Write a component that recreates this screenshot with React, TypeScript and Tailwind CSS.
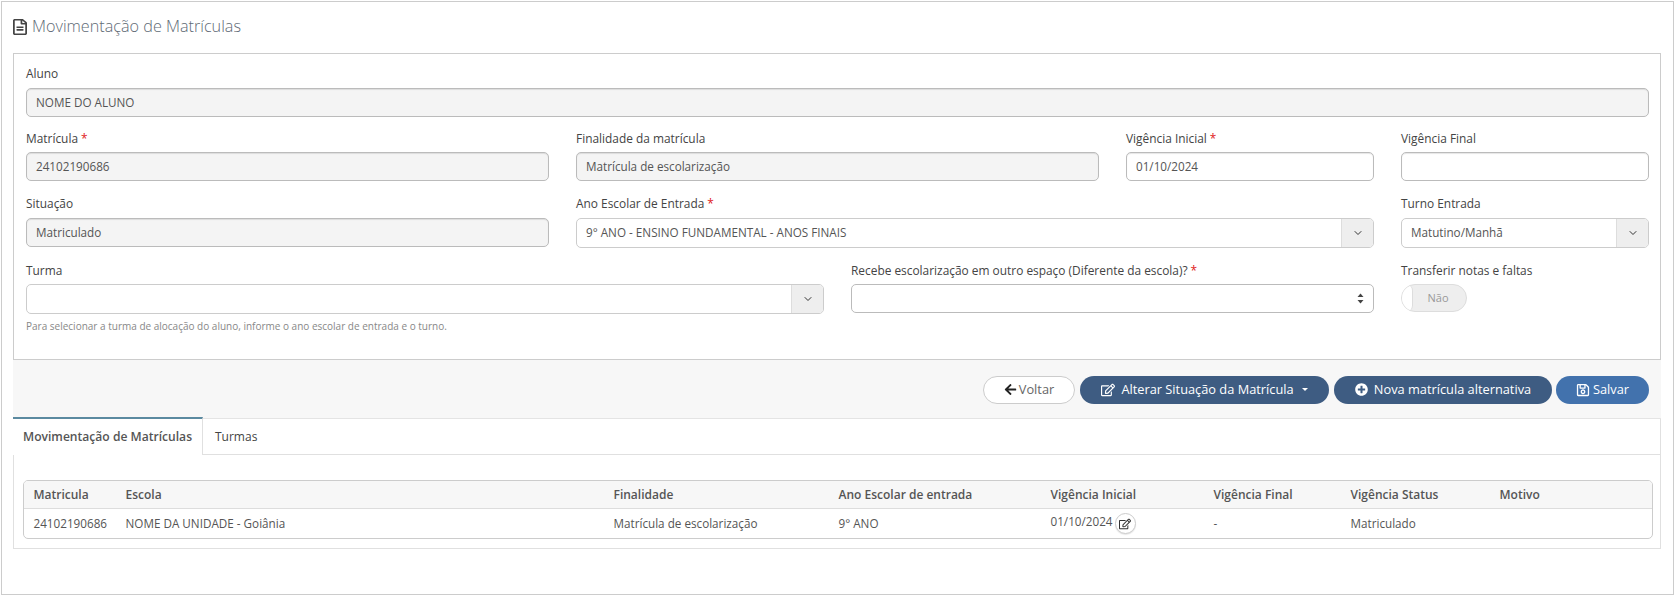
import { ChevronDown } from "lucide-react";
import { FaArrowLeft, FaPlusCircle, FaRegEdit, FaRegFileAlt, FaRegSave } from "react-icons/fa";

function Label({ text, required, loose }: { text: string; required?: boolean; loose?: boolean }) {
  return (
    <label className={`block h-4 text-[11.9px] leading-[14px] text-[#444] ${loose ? "mb-[6px]" : "mb-[5px]"}`}>
      {text}
      {required && <span className="text-[#e02020] ml-[3px]">*</span>}
    </label>
  );
}

function Input({ value, disabled }: { value?: string; disabled?: boolean }) {
  return (
    <div
      className={`h-[29px] flex items-center px-[9px] border border-[#bbb] rounded-[5px] text-[11.7px] text-[#555] shadow-[inset_0_1px_1px_rgba(0,0,0,0.1)] ${
        disabled ? "bg-[#f4f4f4]" : "bg-white"
      }`}
    >
      {value}
    </div>
  );
}

function Select({ value }: { value?: string }) {
  return (
    <div className="h-[30px] flex items-stretch border border-[#ccc] rounded-[5px] text-[11.7px] text-[#555] bg-white overflow-hidden">
      <div className="flex-1 flex items-center px-[9px]">{value}</div>
      <div className="w-[32px] flex items-center justify-center bg-[#eee] border-l border-[#ddd]">
        <ChevronDown size={12} strokeWidth={2} className="text-[#333]" />
      </div>
    </div>
  );
}

const columns = [
  { title: "Matricula", w: "w-[92px]" },
  { title: "Escola", w: "w-[488px]" },
  { title: "Finalidade", w: "w-[225px]" },
  { title: "Ano Escolar de entrada", w: "w-[212px]" },
  { title: "Vigência Inicial", w: "w-[163px]" },
  { title: "Vigência Final", w: "w-[137px]" },
  { title: "Vigência Status", w: "w-[149px]" },
  { title: "Motivo", w: "flex-1" },
];

export default function App() {
  return (
    <div className="w-[1675px] h-[596px] bg-white p-[1px] font-['Open_Sans',sans-serif]">
      <div className="h-[594px] border border-[#ccc] pl-[11px] pr-[12px]">
        {/* Titulo */}
        <div className="h-[51px] flex items-center gap-[5px] pb-[2px] text-[#606a75]">
          <FaRegFileAlt className="w-[14px] h-[16px] text-[#444]" preserveAspectRatio="none" />
          <h1 className="text-[16.2px] font-light">Movimentação de Matrículas</h1>
        </div>

        {/* Formulario */}
        <div className="h-[307px] border border-[#ccc] pl-[12px] pr-[11px] pt-[12px]">
          <Label text="Aluno" loose />
          <Input value="NOME DO ALUNO" disabled />

          <div className="grid grid-cols-12 gap-x-[27px] mt-[14px]">
            <div className="col-span-4">
              <Label text="Matrícula" required />
              <Input value="24102190686" disabled />
            </div>
            <div className="col-span-4">
              <Label text="Finalidade da matrícula" />
              <Input value="Matrícula de escolarização" disabled />
            </div>
            <div className="col-span-2">
              <Label text="Vigência Inicial" required />
              <Input value="01/10/2024" />
            </div>
            <div className="col-span-2">
              <Label text="Vigência Final" />
              <Input />
            </div>
          </div>

          <div className="grid grid-cols-12 gap-x-[27px] mt-[15px]">
            <div className="col-span-4">
              <Label text="Situação" loose />
              <Input value="Matriculado" disabled />
            </div>
            <div className="col-span-6">
              <Label text="Ano Escolar de Entrada" required loose />
              <Select value="9° ANO - ENSINO FUNDAMENTAL - ANOS FINAIS" />
            </div>
            <div className="col-span-2">
              <Label text="Turno Entrada" loose />
              <Select value="Matutino/Manhã" />
            </div>
          </div>

          <div className="grid grid-cols-12 gap-x-[27px] mt-[15px]">
            <div className="col-span-6">
              <Label text="Turma" />
              <Select />
              <p className="mt-[6px] text-[10px] leading-3 text-[#888]">
                Para selecionar a turma de alocação do aluno, informe o ano escolar de entrada e o turno.
              </p>
            </div>
            <div className="col-span-4">
              <Label text="Recebe escolarização em outro espaço (Diferente da escola)?" required />
              <div className="h-[29px] flex items-center justify-end pr-[9px] border border-[#bbb] rounded-[5px] bg-white">
                <svg width="7" height="11" viewBox="0 0 7 11" fill="#444">
                  <path d="M3.5 0.5 6.5 4H0.5Z" />
                  <path d="M3.5 10.5 0.5 7H6.5Z" />
                </svg>
              </div>
            </div>
            <div className="col-span-2">
              <Label text="Transferir notas e faltas" />
              <div className="relative w-[66px] h-[28px] flex items-center justify-center pl-[8px] rounded-full border border-[#ddd] bg-[#eee] text-[11px] text-[#999] overflow-hidden">
                <span className="absolute left-0 top-0 w-[11px] h-full rounded-full bg-white border-r border-[#ddd]" />
                Não
              </div>
            </div>
          </div>
        </div>

        {/* Botoes */}
        <div className="h-[59px] bg-[#f7f7f7] flex items-center justify-end pr-[12px] pt-[1px] text-[12.8px] border-b border-[#e4e4e4]">
          <button className="w-[92px] h-[28px] flex items-center justify-center gap-[2px] rounded-full border border-[#ccc] bg-white text-[#666]">
            <FaArrowLeft size={13} className="text-[#222]" />
            Voltar
          </button>
          <button className="ml-[5px] w-[249px] h-[28px] flex items-center justify-center gap-[6px] rounded-full bg-[#3e5c82] text-white">
            <FaRegEdit size={14} />
            Alterar Situação da Matrícula
            <span className="ml-[2px] border-x-[3px] border-x-transparent border-t-[3px] border-t-white" />
          </button>
          <button className="ml-[5px] w-[218px] h-[28px] flex items-center justify-center gap-[6px] rounded-full bg-[#3e5c82] text-white">
            <FaPlusCircle size={13} />
            Nova matrícula alternativa
          </button>
          <button className="ml-[4px] w-[93px] h-[28px] flex items-center justify-center gap-[3px] rounded-full bg-[#4272ad] text-white">
            <FaRegSave size={14} />
            Salvar
          </button>
        </div>

        {/* Abas */}
        <div className="h-[130px] border border-t-0 border-[#e0e0e0]">
          <div className="h-[36px] flex border-b border-[#e0e0e0] text-[12px] text-[#444]">
            <div className="w-[190px] -ml-px -mt-[2px] flex items-center pl-[10px] h-[38px] pt-[1px] border-t-2 border-t-[#5b8aa0] border-r border-r-[#e0e0e0] bg-white text-[12.1px] font-semibold text-[#555]">
              Movimentação de Matrículas
            </div>
            <div className="px-[12px] flex items-center">Turmas</div>
          </div>

          <div className="ml-[9px] mr-[7px] mt-[25px] border border-[#ccc] rounded-[5px] text-[11.7px] overflow-hidden">
            <div className="h-[28px] flex items-center px-[9.5px] bg-[#f7f7f7] border-b border-[#ddd] text-[12px] font-semibold text-[#555]">
              {columns.map((c) => (
                <div key={c.title} className={c.w}>
                  {c.title}
                </div>
              ))}
            </div>
            <div className="h-[29px] flex items-center px-[9.5px] text-[#555]">
              <div className="w-[92px]">24102190686</div>
              <div className="w-[488px]">NOME DA UNIDADE - Goiânia</div>
              <div className="w-[225px]">Matrícula de escolarização</div>
              <div className="w-[212px]">9° ANO</div>
              <div className="w-[163px] flex items-center">
                <span className="mb-[3px]">01/10/2024</span>
                <span className="ml-[2px] w-[21px] h-[21px] flex items-center justify-center rounded-full border border-[#ccc] bg-white text-[#333] shadow-[0_1px_1px_rgba(0,0,0,0.1)]">
                  <FaRegEdit size={12} />
                </span>
              </div>
              <div className="w-[137px]">-</div>
              <div className="w-[149px]">Matriculado</div>
            </div>
          </div>
        </div>
      </div>
    </div>
  );
}
